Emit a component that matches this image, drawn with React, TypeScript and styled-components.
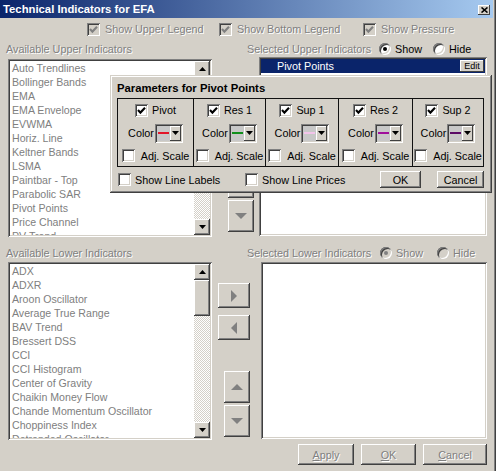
import React from "react";
import styled, { createGlobalStyle } from "styled-components";

const FONT = `"Liberation Sans", Arial, sans-serif`;
const FACE = "#d4d0c8";

const raised = `box-shadow: inset -1px -1px #404040, inset 1px 1px #ffffff, inset -2px -2px #808080, inset 2px 2px ${FACE};`;
const sunken = `box-shadow: inset 1px 1px #808080, inset -1px -1px #ffffff, inset 2px 2px #404040, inset -2px -2px ${FACE};`;

const Global = createGlobalStyle`
  html, body { margin: 0; padding: 0; background: ${FACE}; }
  body { font-family: ${FONT}; font-size: 10.8px; }
  * { box-sizing: border-box; }
`;

const Window = styled.div`
  position: relative;
  width: 496px;
  height: 471px;
  overflow: hidden;
  background: ${FACE};
  box-shadow: inset -1px 0 #404040, inset -2px 0 #808080;
`;

const TitleBar = styled.div`
  height: 18px;
  margin-right: 3px;
  display: flex;
  align-items: center;
  justify-content: space-between;
  background: linear-gradient(to right, #0a246a, #a6caf0);
`;

const TitleText = styled.span`
  padding-left: 3px;
  color: #fff;
  font-weight: bold;
  font-size: 11.3px;
  white-space: nowrap;
`;

const CloseButton = styled.span`
  width: 12px;
  height: 10px;
  margin-right: 3px;
  margin-top: 2px;
  display: flex;
  align-items: center;
  justify-content: center;
  background: ${FACE};
  box-shadow: inset -1px -1px #404040, inset 1px 1px #ffffff;
`;

const OptionsRow = styled.div`
  height: 22px;
  padding-left: 87px;
  display: flex;
  align-items: center;
`;

const Item = styled.div<{ $w?: number; $gap?: number }>`
  display: flex;
  align-items: center;
  gap: ${(p) => p.$gap ?? 5}px;
  ${(p) => (p.$w ? `width: ${p.$w}px; flex: none;` : "")}
`;

const Label = styled.span<{ $disabled?: boolean; $w?: number }>`
  color: ${(p) => (p.$disabled ? "#808080" : "#000")};
  text-shadow: ${(p) => (p.$disabled ? "1px 1px 0 #ffffff" : "none")};
  white-space: nowrap;
  ${(p) => (p.$w ? `width: ${p.$w}px; flex: none;` : "")}
`;

const CheckBox = styled.span<{ $disabled?: boolean }>`
  width: 13px;
  height: 13px;
  flex: none;
  display: inline-flex;
  align-items: center;
  justify-content: center;
  background: ${(p) => (p.$disabled ? FACE : "#fff")};
  ${sunken}
`;

const RadioCircle = styled.span<{ $disabled?: boolean }>`
  width: 12px;
  height: 12px;
  flex: none;
  border-radius: 50%;
  display: inline-flex;
  align-items: center;
  justify-content: center;
  background: ${(p) => (p.$disabled ? FACE : "#fff")};
  box-shadow: inset 1px 1px #808080, inset -1px -1px #ffffff, inset 2px 2px #404040, inset -2px -2px ${FACE};
`;

const RadioDot = styled.span<{ $disabled?: boolean }>`
  width: 4px;
  height: 4px;
  border-radius: 50%;
  background: ${(p) => (p.$disabled ? "#808080" : "#000")};
`;

const HeaderRow = styled.div<{ $pt: number; $h: number }>`
  height: ${(p) => p.$h}px;
  padding-top: ${(p) => p.$pt}px;
  padding-left: 6px;
  display: grid;
  grid-template-columns: 241px 1fr;
  align-items: center;
`;

const RightHeader = styled.div`
  display: flex;
  align-items: center;
`;

const Section = styled.div<{ $cols: string; $h: number }>`
  height: ${(p) => p.$h}px;
  padding-left: 8px;
  display: grid;
  grid-template-columns: ${(p) => p.$cols};
  align-items: start;
`;

const ListBox = styled.div<{ $h: number; $mt?: number }>`
  height: ${(p) => p.$h}px;
  margin-top: ${(p) => p.$mt ?? 0}px;
  background: #fff;
  display: flex;
  padding: 2px;
  ${sunken}
`;

const Items = styled.div`
  flex: 1;
  min-width: 0;
  overflow: hidden;
`;

const ListItem = styled.div`
  height: 14px;
  line-height: 14px;
  padding-left: 2px;
  color: #808080;
  font-size: 10.6px;
  white-space: nowrap;
`;

const SelectedRow = styled.div`
  height: 14px;
  background: #0a246a;
  color: #fff;
  display: flex;
  align-items: center;
  justify-content: space-between;
  padding-left: 16px;
  padding-right: 1px;
  white-space: nowrap;
`;

const EditButton = styled.span`
  width: 24px;
  height: 12px;
  display: flex;
  align-items: center;
  justify-content: center;
  background: ${FACE};
  color: #000;
  font-size: 9px;
  box-shadow: inset -1px -1px #404040, inset 1px 1px #ffffff;
`;

const ScrollBar = styled.div`
  width: 16px;
  flex: none;
  display: flex;
  flex-direction: column;
  background: repeating-conic-gradient(#ffffff 0 25%, ${FACE} 0 50%) 0 0 / 2px 2px;
`;

const ScrollButton = styled.div<{ $h?: number; $mt?: number }>`
  width: 16px;
  height: ${(p) => p.$h ?? 16}px;
  margin-top: ${(p) => p.$mt ?? 0}px;
  flex: none;
  display: flex;
  align-items: center;
  justify-content: center;
  background: ${FACE};
  ${raised}
`;

const ScrollSpacer = styled.div`
  flex: 1;
`;

const MidColumn = styled.div<{ $pt: number; $pr: number }>`
  padding-top: ${(p) => p.$pt}px;
  padding-right: ${(p) => p.$pr}px;
  display: flex;
  flex-direction: column;
  align-items: flex-end;
`;

const ArrowButton = styled.div<{ $w: number; $h: number; $mt?: number }>`
  width: ${(p) => p.$w}px;
  height: ${(p) => p.$h}px;
  margin-top: ${(p) => p.$mt ?? 0}px;
  display: flex;
  align-items: center;
  justify-content: center;
  background: ${FACE};
  ${raised}
`;

const BottomBar = styled.div`
  padding-top: 4px;
  padding-right: 9px;
  display: flex;
  justify-content: flex-end;
  gap: 7px;
`;

const PushButton = styled.div<{ $w: number; $h?: number; $disabled?: boolean }>`
  width: ${(p) => p.$w}px;
  height: ${(p) => p.$h ?? 21}px;
  flex: none;
  display: flex;
  align-items: center;
  justify-content: center;
  background: ${FACE};
  color: ${(p) => (p.$disabled ? "#808080" : "#000")};
  text-shadow: ${(p) => (p.$disabled ? "1px 1px 0 #ffffff" : "none")};
  ${raised}
`;

/* ---------- Popup dialog ---------- */

const Dialog = styled.div`
  position: absolute;
  left: 110px;
  top: 75px;
  width: 382px;
  height: 118px;
  padding: 5px 8px 0 7px;
  background: ${FACE};
  box-shadow: inset -1px -1px #404040, inset 1px 1px ${FACE}, inset -2px -2px #808080, inset 2px 2px #ffffff;
`;

const DialogTitle = styled.div`
  height: 17px;
  line-height: 17px;
  font-weight: bold;
  font-size: 11.3px;
  white-space: nowrap;
`;

const ParamTable = styled.div`
  margin-top: 1px;
  height: 69px;
  border: 1px solid #111;
  display: grid;
  grid-template-columns: 75px 72px 73px 74px 1fr;
`;

const ParamColumn = styled.div<{ $first?: boolean }>`
  display: grid;
  grid-template-rows: 22px 24px 21px;
  border-left: ${(p) => (p.$first ? "none" : "1px solid #111")};
`;

const ParamRow = styled.div<{ $gap: number }>`
  display: flex;
  align-items: center;
  justify-content: center;
  gap: ${(p) => p.$gap}px;
  white-space: nowrap;
`;

const ColorPicker = styled.div`
  width: 28px;
  height: 19px;
  flex: none;
  padding: 2px;
  display: flex;
  background: #c8c8c8;
  ${sunken}
`;

const Swatch = styled.div`
  flex: 1;
  display: flex;
  align-items: center;
  padding: 0 1px;
`;

const SwatchLine = styled.div<{ $color: string }>`
  height: 2px;
  width: 100%;
  background: ${(p) => p.$color};
`;

const PickerButton = styled.div`
  width: 11px;
  flex: none;
  display: flex;
  align-items: center;
  justify-content: center;
  background: ${FACE};
  box-shadow: inset -1px -1px #404040, inset 1px 1px #ffffff;
`;

const DialogFooter = styled.div`
  margin-top: 3px;
  height: 19px;
  padding-left: 1px;
  display: flex;
  align-items: center;
`;

const Spacer = styled.div<{ $w: number }>`
  width: ${(p) => p.$w}px;
  flex: none;
`;

/* ---------- Icons ---------- */

const Check = ({ color }: { color: string }) => (
  <svg width="9" height="9" viewBox="0 0 9 9">
    <path d="M1 4 L3.4 6.6 L8 1.8" fill="none" stroke={color} strokeWidth="2.1" />
  </svg>
);

const Tri = ({ dir, w, h, color }: { dir: "up" | "down" | "left" | "right"; w: number; h: number; color: string }) => {
  const pts =
    dir === "up"
      ? `0,${h} ${w},${h} ${w / 2},0`
      : dir === "down"
      ? `0,0 ${w},0 ${w / 2},${h}`
      : dir === "right"
      ? `0,0 0,${h} ${w},${h / 2}`
      : `${w},0 ${w},${h} 0,${h / 2}`;
  return (
    <svg width={w} height={h} viewBox={`0 0 ${w} ${h}`}>
      <polygon points={pts} fill={color} />
    </svg>
  );
};

const CloseIcon = () => (
  <svg width="7" height="6" viewBox="0 0 7 6">
    <path d="M0.5 0.5 L6.5 5.5 M6.5 0.5 L0.5 5.5" stroke="#000" strokeWidth="1.6" />
  </svg>
);

/* ---------- Data ---------- */

const upperItems = [
  "Auto Trendlines",
  "Bollinger Bands",
  "EMA",
  "EMA Envelope",
  "EVWMA",
  "Horiz. Line",
  "Keltner Bands",
  "LSMA",
  "Paintbar - Top",
  "Parabolic SAR",
  "Pivot Points",
  "Price Channel",
  "PV Trend",
];

const lowerItems = [
  "ADX",
  "ADXR",
  "Aroon Oscillator",
  "Average True Range",
  "BAV Trend",
  "Bressert DSS",
  "CCI",
  "CCI Histogram",
  "Center of Gravity",
  "Chaikin Money Flow",
  "Chande Momentum Oscillator",
  "Choppiness Index",
  "Detrended Oscillator",
];

const params = [
  { name: "Pivot", color: "#e3162a" },
  { name: "Res 1", color: "#10901c" },
  { name: "Sup 1", color: "#f2c4ea" },
  { name: "Res 2", color: "#a0109c" },
  { name: "Sup 2", color: "#5a0a66" },
];

/* ---------- Parts ---------- */

const CheckOption = ({ label, disabled, w }: { label: string; disabled?: boolean; w?: number }) => (
  <Item $w={w} $gap={disabled ? 5 : 4}>
    <CheckBox $disabled={disabled}>
      <Check color={disabled ? "#808080" : "#000"} />
    </CheckBox>
    <Label $disabled={disabled}>{label}</Label>
  </Item>
);

const RadioOption = ({
  label,
  selected,
  disabled,
  w,
}: {
  label: string;
  selected?: boolean;
  disabled?: boolean;
  w?: number;
}) => (
  <Item $w={w} $gap={4}>
    <RadioCircle $disabled={disabled}>{selected && <RadioDot $disabled={disabled} />}</RadioCircle>
    <Label $disabled={disabled}>{label}</Label>
  </Item>
);

const List = ({ items, h, mt, thumbTop }: { items: string[]; h: number; mt?: number; thumbTop: number }) => (
  <ListBox $h={h} $mt={mt}>
    <Items>
      {items.map((t) => (
        <ListItem key={t}>{t}</ListItem>
      ))}
    </Items>
    <ScrollBar>
      <ScrollButton>
        <Tri dir="up" w={7} h={4} color="#000" />
      </ScrollButton>
      <ScrollButton $h={36} $mt={thumbTop} />
      <ScrollSpacer />
      <ScrollButton>
        <Tri dir="down" w={7} h={4} color="#000" />
      </ScrollButton>
    </ScrollBar>
  </ListBox>
);

const MoveButtons = ({ pt, pr, firstGap, sideW, upW }: { pt: number; pr: number; firstGap: number; sideW: number; upW: number }) => (
  <MidColumn $pt={pt} $pr={pr}>
    <ArrowButton $w={sideW} $h={25}>
      <Tri dir="right" w={6} h={12} color="#808080" />
    </ArrowButton>
    <ArrowButton $w={sideW} $h={25} $mt={7}>
      <Tri dir="left" w={6} h={12} color="#808080" />
    </ArrowButton>
    <ArrowButton $w={upW} $h={32} $mt={firstGap}>
      <Tri dir="up" w={12} h={6} color="#808080" />
    </ArrowButton>
    <ArrowButton $w={upW} $h={32} $mt={2}>
      <Tri dir="down" w={12} h={6} color="#808080" />
    </ArrowButton>
  </MidColumn>
);

const ParamsDialog = () => (
  <Dialog>
    <DialogTitle>Parameters for Pivot Points</DialogTitle>
    <ParamTable>
      {params.map((p, i) => (
        <ParamColumn key={p.name} $first={i === 0}>
          <ParamRow $gap={4}>
            <CheckBox>
              <Check color="#000" />
            </CheckBox>
            <span>{p.name}</span>
          </ParamRow>
          <ParamRow $gap={1}>
            <span>Color</span>
            <ColorPicker>
              <Swatch>
                <SwatchLine $color={p.color} />
              </Swatch>
              <PickerButton>
                <Tri dir="down" w={7} h={4} color="#000" />
              </PickerButton>
            </ColorPicker>
          </ParamRow>
          <ParamRow $gap={6}>
            <CheckBox />
            <span>Adj. Scale</span>
          </ParamRow>
        </ParamColumn>
      ))}
    </ParamTable>
    <DialogFooter>
      <Item $w={127} $gap={4}>
        <CheckBox />
        <span>Show Line Labels</span>
      </Item>
      <Item $w={135} $gap={4}>
        <CheckBox />
        <span>Show Line Prices</span>
      </Item>
      <PushButton $w={41} $h={17}>OK</PushButton>
      <Spacer $w={16} />
      <PushButton $w={47} $h={17}>Cancel</PushButton>
    </DialogFooter>
  </Dialog>
);

export default function App() {
  return (
    <>
      <Global />
      <Window>
        <TitleBar>
          <TitleText>Technical Indicators for EFA</TitleText>
          <CloseButton>
            <CloseIcon />
          </CloseButton>
        </TitleBar>

        <OptionsRow>
          <CheckOption label="Show Upper Legend" disabled w={132} />
          <CheckOption label="Show Bottom Legend" disabled w={144} />
          <CheckOption label="Show Pressure" disabled />
        </OptionsRow>

        <HeaderRow $pt={0} $h={17}>
          <Label $disabled>Available Upper Indicators</Label>
          <RightHeader>
            <Label $disabled $w={132}>Selected Upper Indicators</Label>
            <RadioOption label="Show" selected w={54} />
            <RadioOption label="Hide" />
          </RightHeader>
        </HeaderRow>

        <Section $cols="204px 47px 228px" $h={180}>
          <List items={upperItems} h={178} mt={2} thumbTop={20} />
          <MoveButtons pt={22} pr={5} firstGap={30} sideW={32} upW={26} />
          <ListBox $h={179}>
            <Items>
              <SelectedRow>
                <span>Pivot Points</span>
                <EditButton>Edit</EditButton>
              </SelectedRow>
            </Items>
          </ListBox>
        </Section>

        <HeaderRow $pt={6} $h={25}>
          <Label $disabled>Available Lower Indicators</Label>
          <RightHeader>
            <Label $disabled $w={133}>Selected Lower Indicators</Label>
            <RadioOption label="Show" selected disabled w={57} />
            <RadioOption label="Hide" disabled />
          </RightHeader>
        </HeaderRow>

        <Section $cols="204px 49px 226px" $h={178}>
          <List items={lowerItems} h={178} thumbTop={0} />
          <MoveButtons pt={21} pr={11} firstGap={31} sideW={32} upW={26} />
          <ListBox $h={177} />
        </Section>

        <BottomBar>
          <PushButton $w={56} $disabled>
            <span>
              <u>A</u>pply
            </span>
          </PushButton>
          <PushButton $w={55} $disabled>
            <span>
              <u>O</u>K
            </span>
          </PushButton>
          <PushButton $w={64} $disabled>
            <span>
              <u>C</u>ancel
            </span>
          </PushButton>
        </BottomBar>

        <ParamsDialog />
      </Window>
    </>
  );
}
